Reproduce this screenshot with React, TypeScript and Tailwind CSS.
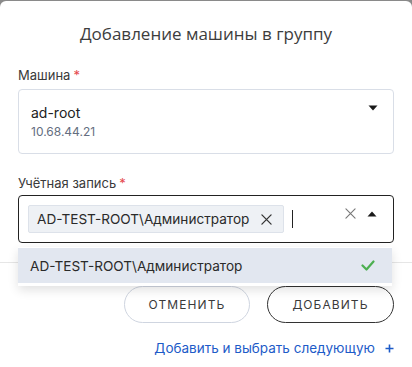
import * as React from 'react';

const CaretDown = () => (
    <svg width="10" height="6" viewBox="0 0 10 6" className="block">
        <path d="M0.5 0.5h9L5 5.5z" fill="#1a1a1a" />
    </svg>
);

const CaretUp = () => (
    <svg width="10" height="6" viewBox="0 0 10 6" className="block">
        <path d="M0.5 5.5h9L5 0.5z" fill="#1a1a1a" />
    </svg>
);

const Cross: React.FC<{ size: number; color: string; stroke?: number }> = ({ size, color, stroke = 1.4 }) => (
    <svg width={size} height={size} viewBox="0 0 12 12" className="block">
        <path d="M1 1l10 10M11 1L1 11" stroke={color} strokeWidth={stroke} strokeLinecap="round" />
    </svg>
);

const Check = () => (
    <svg width="14" height="11" viewBox="0 0 14 11" className="block">
        <path d="M1.5 5.5l4 4L12.5 1.5" fill="none" stroke="#4caf50" strokeWidth="2.2" strokeLinecap="round" strokeLinejoin="round" />
    </svg>
);

const Label: React.FC<{ text: string }> = ({ text }) => (
    <div className="text-[13px] leading-[18px] text-[#3a3a3a]">
        {text}
        <span className="ml-[3px] text-[#e5484d]">*</span>
    </div>
);

export default function App() {
    return (
        <div className="h-[367px] w-[412px] overflow-hidden bg-[#8a8a8a] pt-px font-['Inter',sans-serif]">
            <div className="relative h-full rounded-t-[6px] bg-white">
                <h2 className="pt-[22px] text-center font-['Open_Sans',sans-serif] text-[17px] leading-[22px] text-[#3d3d3d]">
                    Добавление машины в группу
                </h2>

                <div className="px-[18px]">
                    <div className="mt-[21px]">
                        <Label text="Машина" />
                        <div className="mt-[5px] flex h-[65px] items-start rounded-[4px] border border-[#d9dee7] pl-[12px] pr-[15px] pt-[13px]">
                            <div className="flex-1">
                                <div className="text-[14px] leading-[20px] text-[#222]">ad-root</div>
                                <div className="text-[12px] leading-[18px] text-[#646e80]">10.68.44.21</div>
                            </div>
                            <div className="pt-[2px]">
                                <CaretDown />
                            </div>
                        </div>
                    </div>

                    <div className="mt-[20px]">
                        <Label text="Учётная запись" />
                        <div className="mt-[3px] flex h-[48px] items-center rounded-[4px] border border-[#222] pl-[9px] pr-[16px]">
                            <div className="flex h-[28px] items-center gap-[12px] rounded-[2px] border border-[#dde2ea] bg-[#eef1f5] pl-[8px] pr-[11px]">
                                <span className="text-[13.6px] leading-[20px] text-[#2a2a2a]">AD-TEST-ROOT\Администратор</span>
                                <Cross size={11} color="#333" />
                            </div>
                            <div className="ml-[8px] h-[18px] w-px bg-[#222]" />
                            <div className="flex-1" />
                            <div className="flex items-center gap-[11px] self-start pt-[12px]">
                                <Cross size={11} color="#777" stroke={1.2} />
                                <CaretUp />
                            </div>
                        </div>
                    </div>
                </div>

                <div className="mt-[19px] border-t border-[#e6e6e6] px-[18px] pt-[23px]">
                    <div className="flex justify-end gap-[17px]">
                        <button className="h-[37px] w-[126px] rounded-full border border-[#cfd5e0] text-[12px] font-normal tracking-[0.09em] text-[#3a3a3a]">
                            ОТМЕНИТЬ
                        </button>
                        <button className="h-[37px] w-[127px] rounded-full border border-[#333] text-[12px] font-normal tracking-[0.09em] text-[#3a3a3a]">
                            ДОБАВИТЬ
                        </button>
                    </div>
                    <div className="mt-[16px] flex items-center justify-end gap-[10px] text-[13.5px] leading-[18px] text-[#1d5bc8]">
                        <span>Добавить и выбрать следующую</span>
                        <svg width="9" height="9" viewBox="0 0 9 9" className="block">
                            <path d="M4.5 0.5v8M0.5 4.5h8" stroke="#1d5bc8" strokeWidth="1.6" />
                        </svg>
                    </div>
                </div>

                <div className="absolute left-[18px] top-[246px] w-[374px] bg-white py-[1px] pb-[3px] shadow-[0_4px_10px_rgba(0,0,0,0.12)]">
                    <div className="flex h-[35px] items-center justify-between bg-[#e2e7f0] pl-[12px] pr-[17px]">
                        <span className="text-[13.6px] leading-[20px] text-[#2a2a2a]">AD-TEST-ROOT\Администратор</span>
                        <Check />
                    </div>
                </div>
            </div>
        </div>
    );
}
